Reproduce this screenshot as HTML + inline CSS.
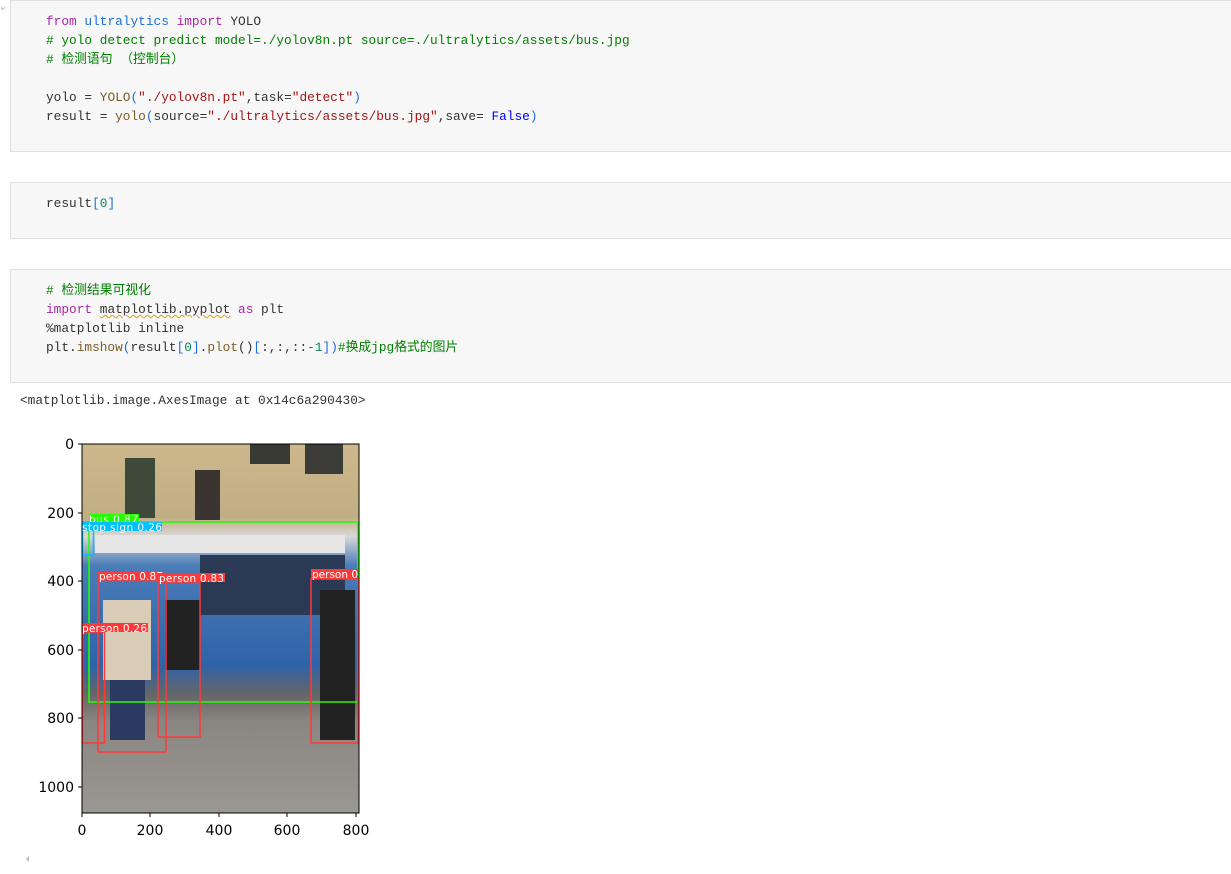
<!DOCTYPE html>
<html><head><meta charset="utf-8"><style>
body{margin:0;width:1231px;height:874px;background:#fff;position:relative;overflow:hidden;font-family:"Liberation Mono","Noto Sans CJK SC",monospace;}
.cell{position:absolute;left:10px;right:0;background:#f7f7f7;border:1px solid #e0e0e0;border-right:none;}
.code{position:absolute;left:35px;font-size:12.8px;line-height:19px;white-space:pre;color:#333;}
.k{color:#a626a4}.c{color:#008000}.s{color:#a31515}.b{color:#0000ff}.n{color:#098658}.f{color:#795e26}.p{color:#1a6fd8}
.squig{text-decoration:underline wavy #e0a000;text-decoration-thickness:1px}
.out{position:absolute;left:20px;top:393px;font-size:12.8px;color:#333;}
</style></head><body>
<div style="position:absolute;left:0;top:2px;font-size:9px;color:#999;">⌄</div>
<div class="cell" style="top:0;height:150px;"><div class="code" style="top:11px;"><span class="k">from</span> <span class="p">ultralytics</span> <span class="k">import</span> YOLO
<span class="c"># yolo detect predict model=./yolov8n.pt source=./ultralytics/assets/bus.jpg</span>
<span class="c"># 检测语句 （控制台）</span>

yolo = <span class="f">YOLO</span><span class="p">(</span><span class="s">"./yolov8n.pt"</span>,task=<span class="s">"detect"</span><span class="p">)</span>
result = <span class="f">yolo</span><span class="p">(</span>source=<span class="s">"./ultralytics/assets/bus.jpg"</span>,save= <span class="b">False</span><span class="p">)</span></div></div>
<div class="cell" style="top:182px;height:55px;"><div class="code" style="top:11px;">result<span class="p">[</span><span class="n">0</span><span class="p">]</span></div></div>
<div class="cell" style="top:269px;height:112px;"><div class="code" style="top:11px;"><span class="c"># 检测结果可视化</span>
<span class="k">import</span> <span class="squig">matplotlib.pyplot</span> <span class="k">as</span> plt
%matplotlib inline
plt.<span class="f">imshow</span><span class="p">(</span>result<span class="p">[</span><span class="n">0</span><span class="p">]</span>.<span class="f">plot</span>()<span class="p">[</span>:,:,::<span class="n">-1</span><span class="p">]</span><span class="p">)</span><span class="c">#换成jpg格式的图片</span></div></div>
<div class="out">&lt;matplotlib.image.AxesImage at 0x14c6a290430&gt;</div>
<svg style="position:absolute;left:0;top:0" width="1231" height="874">
<defs><linearGradient id="g" x1="0" y1="0" x2="0" y2="1">
<stop offset="0" stop-color="#cdb88c"/><stop offset="0.2" stop-color="#c2ae84"/><stop offset="0.25" stop-color="#d8d8d8"/><stop offset="0.33" stop-color="#4a7cb8"/><stop offset="0.6" stop-color="#2f63a8"/><stop offset="0.68" stop-color="#666"/><stop offset="0.75" stop-color="#8a8580"/><stop offset="1" stop-color="#9a9894"/></linearGradient></defs>
<rect x="82" y="444" width="277" height="369" fill="url(#g)"/>
<rect x="125" y="458" width="30" height="60" fill="#3d4a3a"/><rect x="195" y="470" width="25" height="50" fill="#3a3530"/><rect x="250" y="444" width="40" height="20" fill="#3a3a35"/><rect x="305" y="444" width="38" height="30" fill="#3c3c38"/>
<rect x="95" y="535" width="250" height="18" fill="#e6e6e6"/>
<rect x="200" y="555" width="145" height="60" fill="#2a3a55"/>
<rect x="103" y="600" width="48" height="80" fill="#d9cdb8"/><rect x="110" y="680" width="35" height="60" fill="#2a3a60"/>
<rect x="165" y="600" width="35" height="70" fill="#222"/>
<rect x="320" y="590" width="35" height="150" fill="#222"/>
<g fill="none" stroke-width="1.5">
<rect x="89" y="522" width="269" height="180" stroke="#22ff00"/>
<rect x="82.5" y="522" width="11" height="33" stroke="#00c0ff"/>
<rect x="98" y="580" width="68" height="172" stroke="#ff3838"/>
<rect x="158" y="582" width="42" height="155" stroke="#ff3838"/>
<rect x="311" y="579" width="47" height="164" stroke="#ff3838"/>
<rect x="82.5" y="632" width="22" height="111" stroke="#ff3838"/>
</g>
<g font-family="DejaVu Sans,sans-serif" font-size="10.5" fill="#fff">
<rect x="89" y="514" width="50" height="9" fill="#22ff00"/><text x="89" y="523" textLength="49">bus 0.87</text>
<rect x="82" y="522" width="80" height="9" fill="#00c0ff"/><text x="82" y="531" textLength="80">stop sign 0.26</text>
<rect x="98" y="571" width="66" height="9" fill="#ff3838"/><text x="99" y="580" textLength="64">person 0.87</text>
<rect x="158" y="573" width="67" height="9" fill="#ff3838"/><text x="159" y="582" textLength="65">person 0.83</text>
<rect x="311" y="569" width="47" height="10" fill="#ff3838"/><text x="312" y="578">person 0.</text>
<rect x="82" y="623" width="66" height="9" fill="#ff3838"/><text x="82" y="632" textLength="65">person 0.26</text>
</g>
<rect x="82" y="444" width="277" height="369" fill="none" stroke="#000" stroke-width="1"/>
<g stroke="#000"><line x1="78" y1="444" x2="82" y2="444"/><line x1="78" y1="513" x2="82" y2="513"/><line x1="78" y1="581" x2="82" y2="581"/><line x1="78" y1="650" x2="82" y2="650"/><line x1="78" y1="718" x2="82" y2="718"/><line x1="78" y1="787" x2="82" y2="787"/>
<line x1="82" y1="813" x2="82" y2="817"/><line x1="150" y1="813" x2="150" y2="817"/><line x1="219" y1="813" x2="219" y2="817"/><line x1="287" y1="813" x2="287" y2="817"/><line x1="356" y1="813" x2="356" y2="817"/></g>
<g font-family="DejaVu Sans,sans-serif" font-size="14" fill="#000" text-anchor="end">
<text x="74" y="449">0</text><text x="74" y="518">200</text><text x="74" y="586">400</text><text x="74" y="655">600</text><text x="74" y="723">800</text><text x="74" y="792">1000</text></g>
<g font-family="DejaVu Sans,sans-serif" font-size="14" fill="#000" text-anchor="middle">
<text x="82" y="835">0</text><text x="150" y="835">200</text><text x="219" y="835">400</text><text x="287" y="835">600</text><text x="356" y="835">800</text></g>
<polygon points="29,856 26,859 29,862" fill="#bbb"/>
</svg>
</body></html>
